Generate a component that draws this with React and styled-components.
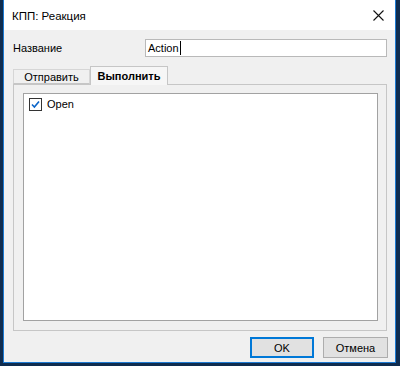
import React, { useState } from "react";
import styled, { createGlobalStyle } from "styled-components";

const Global = createGlobalStyle`
  html, body { margin: 0; padding: 0; }
  body {
    font-family: "Liberation Sans", "DejaVu Sans", sans-serif;
    font-size: 11px;
    color: #000;
  }
`;

const Desktop = styled.div`
  width: 400px;
  height: 366px;
  box-sizing: border-box;
  background: #0f2c4f;
  padding: 0 4px 3px 3px;
  display: flex;
`;

const Window = styled.div`
  flex: 1;
  display: flex;
  flex-direction: column;
  border: 1px solid #1c7ad2;
  border-top: none;
  background: #f0f0f0;
`;

const TitleBar = styled.div`
  height: 30px;
  flex: none;
  background: #fff;
  display: flex;
  align-items: center;
  padding: 0 8px 0 8px;
`;

const Title = styled.span`
  flex: 1;
  font-size: 11.5px;
  padding-top: 2px;
`;

const CloseBtn = styled.div`
  width: 30px;
  height: 30px;
  display: flex;
  align-items: center;
  justify-content: center;
  margin-right: -6px;
`;

const Body = styled.div`
  flex: 1;
  display: flex;
  flex-direction: column;
  padding: 9px 8px 0 9px;
`;

const NameRow = styled.div`
  display: flex;
  align-items: center;
  height: 18px;
`;

const Label = styled.label`
  width: 132px;
  flex: none;
  padding-left: 0;
`;

const TextInput = styled.div`
  flex: 1;
  height: 18px;
  box-sizing: border-box;
  border: 1px solid #b9b9b9;
  background: #fff;
  padding: 0 2px;
  display: flex;
  align-items: center;
`;

const Caret = styled.span`
  display: inline-block;
  width: 1px;
  height: 14px;
  background: #000;
  margin-left: 1px;
`;

const Tabs = styled.div`
  margin-top: 9px;
  display: flex;
  flex-direction: column;
`;

const TabStrip = styled.div`
  display: flex;
  align-items: flex-end;
  height: 18px;
  position: relative;
  z-index: 1;
`;

const Tab = styled.div`
  box-sizing: border-box;
  height: ${(p) => (p.$active ? "19px" : "15px")};
  width: ${(p) => p.$w}px;
  border: 1px solid ${(p) => (p.$active ? "#c6c6c6" : "#d6d6d6")};
  border-bottom: ${(p) => (p.$active ? "none" : "1px solid #c6c6c6")};
  background: ${(p) => (p.$active ? "#f6f6f6" : "#f0f0f0")};
  font-weight: ${(p) => (p.$active ? "bold" : "normal")};
  margin-bottom: ${(p) => (p.$active ? "-1px" : "0")};
  display: flex;
  align-items: center;
  justify-content: center;
  padding-top: ${(p) => (p.$active ? "0" : "1px")};
`;

const Panel = styled.div`
  height: 247px;
  box-sizing: border-box;
  border: 1px solid #c6c6c6;
  background: #f0f0f0;
  padding: 8px 8px 9px 9px;
  display: flex;
`;

const ListBox = styled.div`
  flex: 1;
  background: #fff;
  border: 1px solid #a2a2a2;
  padding: 3px 5px;
`;

const CheckRow = styled.label`
  display: flex;
  align-items: center;
  gap: 5px;
  height: 14px;
`;

const Box = styled.span`
  width: 11px;
  height: 11px;
  border: 1px solid #333;
  background: #fff;
  display: flex;
  align-items: center;
  justify-content: center;
`;

const Footer = styled.div`
  display: flex;
  justify-content: flex-end;
  gap: 9px;
  margin-top: 6px;
  margin-right: -1px;
`;

const Button = styled.button`
  font: inherit;
  width: ${(p) => p.$w}px;
  height: 21px;
  box-sizing: border-box;
  background: #e1e1e1;
  border: 1px solid ${(p) => (p.$primary ? "#0078d7" : "#adadad")};
  box-shadow: ${(p) => (p.$primary ? "inset 0 0 0 1px #0078d7" : "none")};
  padding: 0;
  color: #000;
`;

export default function App() {
  const [checked, setChecked] = useState(true);
  return (
    <>
      <Global />
      <Desktop>
        <Window>
          <TitleBar>
            <Title>КПП: Реакция</Title>
            <CloseBtn>
              <svg width="11" height="11" viewBox="0 0 11 11">
                <path d="M0.5 0.5L10.5 10.5M10.5 0.5L0.5 10.5" stroke="#111" strokeWidth="1.1" />
              </svg>
            </CloseBtn>
          </TitleBar>
          <Body>
            <NameRow>
              <Label>Название</Label>
              <TextInput>
                Action
                <Caret />
              </TextInput>
            </NameRow>
            <Tabs>
              <TabStrip>
                <Tab $w={77}>Отправить</Tab>
                <Tab $w={78} $active>
                  Выполнить
                </Tab>
              </TabStrip>
              <Panel>
                <ListBox>
                  <CheckRow onClick={() => setChecked(!checked)}>
                    <Box>
                      {checked && (
                        <svg width="9" height="9" viewBox="0 0 9 9">
                          <path d="M1 4.5L3.4 7L8 1.5" fill="none" stroke="#0a64c8" strokeWidth="1.6" />
                        </svg>
                      )}
                    </Box>
                    Open
                  </CheckRow>
                </ListBox>
              </Panel>
            </Tabs>
            <Footer>
              <Button $w={64} $primary>
                OK
              </Button>
              <Button $w={65}>Отмена</Button>
            </Footer>
          </Body>
        </Window>
      </Desktop>
    </>
  );
}
